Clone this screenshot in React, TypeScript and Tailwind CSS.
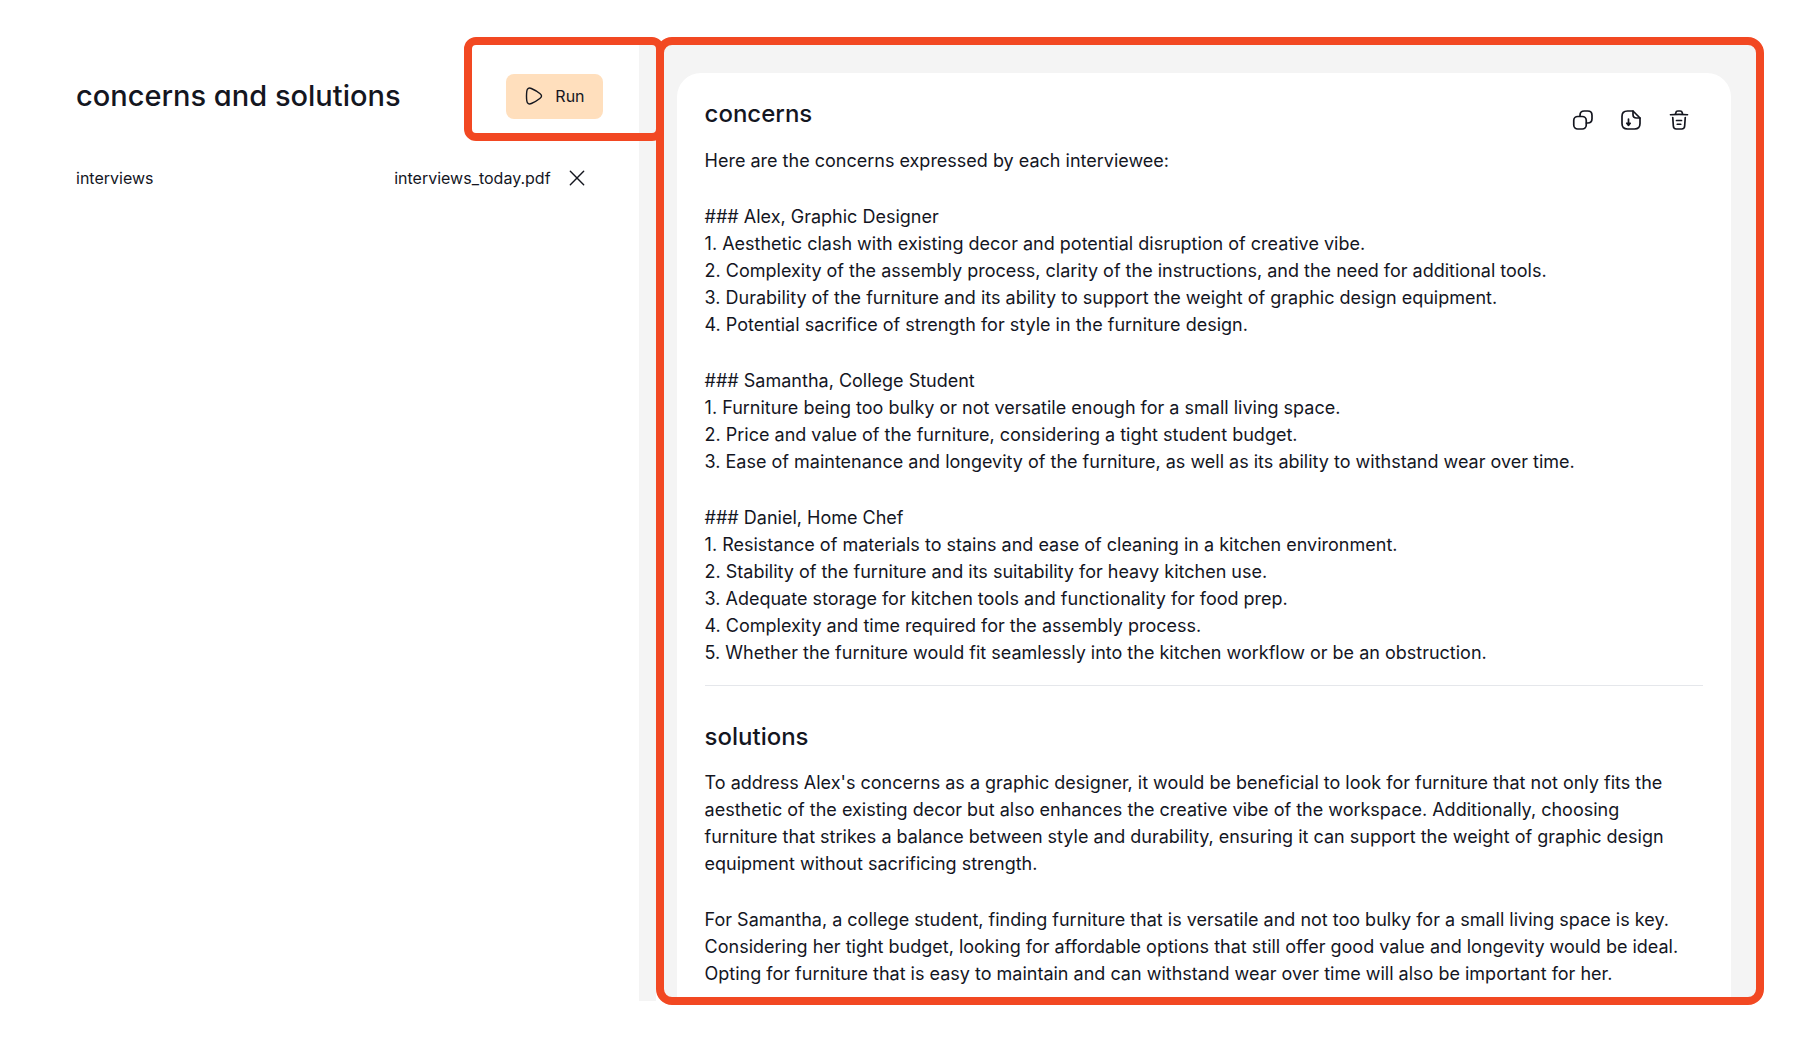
import type { ReactNode } from "react";

const concerns: string[][] = [
  ["Here are the concerns expressed by each interviewee:"],
  [
    "### Alex, Graphic Designer",
    "1. Aesthetic clash with existing decor and potential disruption of creative vibe.",
    "2. Complexity of the assembly process, clarity of the instructions, and the need for additional tools.",
    "3. Durability of the furniture and its ability to support the weight of graphic design equipment.",
    "4. Potential sacrifice of strength for style in the furniture design.",
  ],
  [
    "### Samantha, College Student",
    "1. Furniture being too bulky or not versatile enough for a small living space.",
    "2. Price and value of the furniture, considering a tight student budget.",
    "3. Ease of maintenance and longevity of the furniture, as well as its ability to withstand wear over time.",
  ],
  [
    "### Daniel, Home Chef",
    "1. Resistance of materials to stains and ease of cleaning in a kitchen environment.",
    "2. Stability of the furniture and its suitability for heavy kitchen use.",
    "3. Adequate storage for kitchen tools and functionality for food prep.",
    "4. Complexity and time required for the assembly process.",
    "5. Whether the furniture would fit seamlessly into the kitchen workflow or be an obstruction.",
  ],
];

const solutions: string[][] = [
  [
    "To address Alex's concerns as a graphic designer, it would be beneficial to look for furniture that not only fits the aesthetic of the existing decor but also enhances the creative vibe of the workspace. Additionally, choosing furniture that strikes a balance between style and durability, ensuring it can support the weight of graphic design equipment without sacrificing strength.",
  ],
  [
    "For Samantha, a college student, finding furniture that is versatile and not too bulky for a small living space is key. Considering her tight budget, looking for affordable options that still offer good value and longevity would be ideal. Opting for furniture that is easy to maintain and can withstand wear over time will also be important for her.",
  ],
];

function Icon({ children, size = "size-6" }: { children: ReactNode; size?: string }) {
  return (
    <svg
      viewBox="0 0 24 24"
      className={size}
      fill="none"
      stroke="currentColor"
      strokeWidth="1.7"
      strokeLinecap="round"
      strokeLinejoin="round"
      aria-hidden="true"
    >
      {children}
    </svg>
  );
}

function CopyIcon() {
  return (
    <Icon>
      <rect x="2.75" y="8.5" width="12.5" height="12.5" rx="4" />
      <path d="M9 8.25V7.250C9 4.250 10.500 3 13.250 3h3.500C19.750 3 21 4.250 21 7.250v3.500c0 2.750-1.250 4.250-4.250 4.250h-1.250" />
    </Icon>
  );
}

function DownloadIcon() {
  return (
    <Icon>
      <path d="M14 3H8.500C4.500 3 3 4.750 3 8.500v7C3 19.250 4.750 21 8.500 21h7c3.750 0 5.500-1.750 5.500-5.500V10z" />
      <path d="M14 3v3.500C14 9 15 10 17.500 10H21" />
      <path d="M9.500 11v6" />
      <path d="M7.750 15.250h3.500L9.500 17.250z" fill="currentColor" />
    </Icon>
  );
}

function TrashIcon() {
  return (
    <Icon>
      <path d="M3.500 6.750c5.500-.5 11.500-.5 17 0" />
      <path d="M8.500 6.250l.3-1.500C9 3.550 9.500 3 10.800 3h2.400c1.300 0 1.800.55 2 1.650l.3 1.600" />
      <path d="M18.250 9.500l-.6 8.500c-.15 2-.7 3-2.900 3h-5.500c-2.200 0-2.750-1-2.900-3l-.6-8.500" />
      <path d="M10.300 16.250h3.400M9.500 12.500h5" />
    </Icon>
  );
}

function Blocks({ blocks }: { blocks: string[][] }) {
  return (
    <div className="flex flex-col gap-[29px] text-lg leading-[27px]">
      {blocks.map((lines) => (
        <div key={lines[0]}>
          {lines.map((line) => (
            <p key={line}>{line}</p>
          ))}
        </div>
      ))}
    </div>
  );
}

export default function App() {
  return (
    <div className="flex h-screen overflow-hidden bg-white pt-[37px] pr-[39px] pb-9 font-['Inter',sans-serif] text-[#14161f]">
      <aside className="relative z-10 w-[36.2%] shrink-0 pr-9 pl-[76px]">
        <div
          aria-hidden="true"
          className="pointer-events-none absolute top-0 -right-[25px] h-[104px] w-[200px] rounded-xl border-8 border-[#f24822]"
        />
        <header className="flex h-[118px] items-center justify-between">
          <h1 className="text-[29px] font-medium [font-feature-settings:'cv11']">concerns and solutions</h1>
          <button type="button" className="flex h-[45px] items-center gap-[11px] rounded-lg bg-[#ffdfbd] px-[18px]">
            <Icon size="size-5">
              <path d="M3 12c0-2 .1-4 .4-6C3.800 2.800 6 1.800 8.800 3c3.700 1.600 7.200 3.600 10.200 6 2.700 2.200 2.700 3.800 0 6-3 2.400-6.500 4.400-10.200 6-2.800 1.200-5 .2-5.400-3-.3-2-.4-4-.4-6z" />
            </Icon>
            Run
          </button>
        </header>
        <div className="mt-[11px] flex items-center justify-between pr-4">
          <span>interviews</span>
          <div className="flex items-center gap-4">
            <span>interviews_today.pdf</span>
            <button type="button" aria-label="Remove file">
              <Icon size="size-5">
                <path d="M4 4l16 16M20 4L4 20" />
              </Icon>
            </button>
          </div>
        </div>
      </aside>
      <div className="flex min-w-0 flex-1">
        <div className="mt-2 mb-1 w-[17px] shrink-0 bg-[#f4f4f4]" />
        <main className="flex min-w-0 flex-1 overflow-hidden rounded-2xl border-8 border-[#f24822] bg-[#f4f4f4] pt-7 pr-[25px] pl-[13px]">
          <article className="min-w-0 flex-1 rounded-t-3xl bg-white px-7">
            <section className="border-b border-gray-200 pb-[19px]">
              <div className="flex h-[74px] items-center justify-between pt-4 pr-3">
                <h2 className="pb-2 text-2xl font-medium [font-feature-settings:'cv11']">concerns</h2>
                <div className="flex gap-6 pt-1">
                  <button type="button" aria-label="Copy"><CopyIcon /></button>
                  <button type="button" aria-label="Download"><DownloadIcon /></button>
                  <button type="button" aria-label="Delete"><TrashIcon /></button>
                </div>
              </div>
              <Blocks blocks={concerns} />
            </section>
            <section className="pt-[34px] pr-3">
              <h2 className="pb-4 text-2xl leading-[33px] font-medium [font-feature-settings:'cv11']">solutions</h2>
              <Blocks blocks={solutions} />
            </section>
          </article>
        </main>
      </div>
    </div>
  );
}
